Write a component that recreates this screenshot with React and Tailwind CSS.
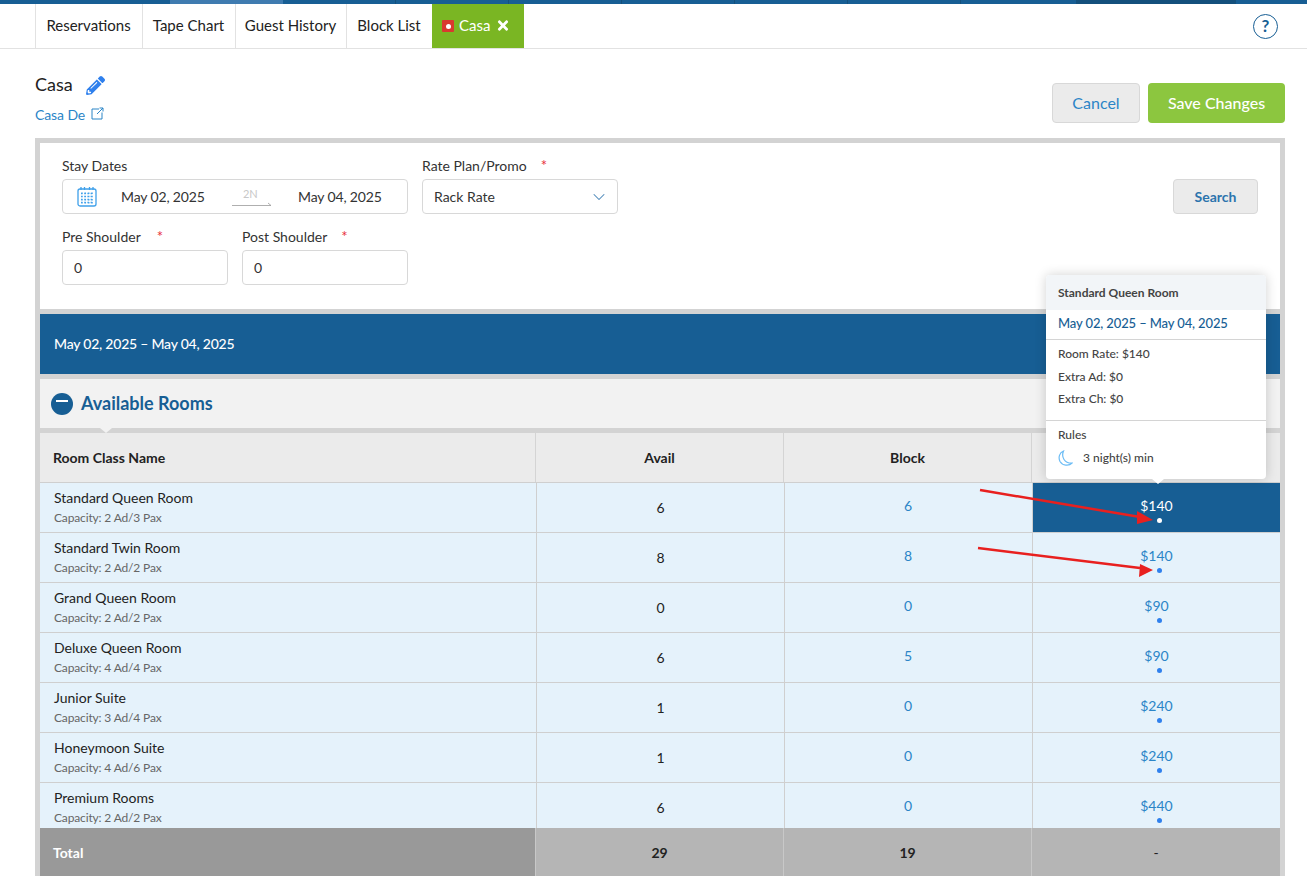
import { FaPencilAlt, FaTimes } from "react-icons/fa";
import { ChevronDown } from "lucide-react";

const rooms = [
  { name: "Standard Queen Room", cap: "Capacity: 2 Ad/3 Pax", avail: 6, block: 6, rate: "$140", active: true },
  { name: "Standard Twin Room", cap: "Capacity: 2 Ad/2 Pax", avail: 8, block: 8, rate: "$140" },
  { name: "Grand Queen Room", cap: "Capacity: 2 Ad/2 Pax", avail: 0, block: 0, rate: "$90" },
  { name: "Deluxe Queen Room", cap: "Capacity: 4 Ad/4 Pax", avail: 6, block: 5, rate: "$90" },
  { name: "Junior Suite", cap: "Capacity: 3 Ad/4 Pax", avail: 1, block: 0, rate: "$240" },
  { name: "Honeymoon Suite", cap: "Capacity: 4 Ad/6 Pax", avail: 1, block: 0, rate: "$240" },
  { name: "Premium Rooms", cap: "Capacity: 2 Ad/2 Pax", avail: 6, block: 0, rate: "$440" },
];

const tabs = [
  { label: "Reservations", width: "w-[107px]" },
  { label: "Tape Chart", width: "w-[93px]" },
  { label: "Guest History", width: "w-[111px]" },
  { label: "Block List", width: "w-[86px]" },
];

function Label({ children, required, gap = "ml-4" }) {
  return (
    <div className="text-[14px] leading-[17px] text-[#333] mb-[5px] h-[17px]">
      {children}
      {required && <span className={`${gap} text-[15px] text-[#e8303a]`}>*</span>}
    </div>
  );
}

function Arrows() {
  return (
    <svg className="absolute left-0 top-0 pointer-events-none" width="1307" height="876">
      <line x1="980" y1="490" x2="1140" y2="517" stroke="#e8201f" strokeWidth="2.5" />
      <polygon points="1153,520 1137,524 1137,511" fill="#e8201f" />
      <line x1="978" y1="548" x2="1140" y2="568" stroke="#e8201f" strokeWidth="2.5" />
      <polygon points="1153,570 1139,577 1140,564" fill="#e8201f" />
    </svg>
  );
}

function RateTooltip() {
  return (
    <div className="absolute left-[1046px] top-[275px] w-[220px] h-[204px] bg-white rounded-sm shadow-[0_0_12px_rgba(0,0,0,0.18)] text-[#444]">
      <div className="h-[35px] bg-[#f2f5f8] flex items-center px-3 text-[12px] font-bold text-[#444] rounded-t-sm">
        Standard Queen Room
      </div>
      <div className="h-[30px] border-b border-[#d4d4d4] flex items-center pb-[2px] px-3 text-[13px] font-medium text-[#175e94] tracking-[-0.12px]">
        May 02, 2025 – May 04, 2025
      </div>
      <div className="h-[81px] border-b border-[#d4d4d4] px-3 pt-[3px] text-[12px] leading-[22.5px] font-medium">
        <div>Room Rate: $140</div>
        <div>Extra Ad: $0</div>
        <div>Extra Ch: $0</div>
      </div>
      <div className="px-3 pt-[5px] text-[12px] font-medium">
        <div className="leading-[17px]">Rules</div>
        <div className="flex items-center gap-[10px] mt-[6px] h-[17px]">
          <svg width="15" height="16" viewBox="0 0 15 16" fill="none" stroke="#6bbcf5" strokeWidth="1.2">
            <path d="M5.5 1C3 7 6.5 13.5 14 13.2C11 16.3 4.5 15.8 2 11.5C0 7.5 1.5 2.5 5.5 1Z" />
          </svg>
          <span>3 night(s) min</span>
        </div>
      </div>
      <div className="absolute left-[106px] -bottom-[5px] w-0 h-0 border-x-[6px] border-x-transparent border-t-[5px] border-t-white" />
    </div>
  );
}

export default function App() {
  return (
    <div className="relative w-[1307px] h-[876px] overflow-hidden bg-white text-[#222]" style={{ fontFamily: "Lato, 'Open Sans', sans-serif" }}>
      {/* Top strip */}
      <div className="h-[4px] flex bg-[#175e94]">
        <div className="w-[170px]" />
        <div className="w-[113px] bg-[#3f7bb0]" />
        <div className="w-[113px] border-r border-[#14507c]" />
        <div className="w-[113px] border-r border-[#14507c]" />
        <div className="w-[113px] border-r border-[#14507c]" />
        <div className="w-[113px] border-r border-[#14507c]" />
        <div className="w-[113px] border-r border-[#14507c]" />
        <div className="w-[113px] border-r border-[#14507c]" />
        <div className="w-[115px]" />
        <div className="w-[160px] bg-[#14507c]" />
      </div>

      {/* Tab bar */}
      <div className="h-[45px] pl-[35px] pr-[29px] flex items-stretch border-b border-[#e2e2e2]">
        {tabs.map((tab) => (
          <div key={tab.label} className={`${tab.width} border-l border-[#e2e2e2] flex items-center justify-center pb-[2px] pr-[1px] text-[15px] text-[#222]`}>
            {tab.label}
          </div>
        ))}
        <div className="w-[92px] bg-[#7ab623] flex items-center pl-[10px] pb-[2px] text-[15px] text-white">
          <span className="w-[12px] h-[12px] bg-[#d9392f] rounded-[1px] flex items-center justify-center mr-[5px] mt-[2px]">
            <span className="w-[5px] h-[5px] bg-white rounded-full" />
          </span>
          Casa
          <FaTimes className="ml-[6px] w-[14px] h-[15px]" />
        </div>
        <div className="ml-auto flex items-center">
          <div className="w-[25px] h-[25px] rounded-full border border-[#175e94] flex items-center justify-center text-[17px] font-bold text-[#175e94]">
            ?
          </div>
        </div>
      </div>

      {/* Title row */}
      <div className="h-[89px] pl-[35px] pr-[22px] flex justify-between">
        <div>
          <div className="flex items-center mt-[25px] h-[22px] text-[18px] text-[#222]">
            <span className="mb-[1px]">Casa</span>
            <FaPencilAlt className="ml-[13px] w-[19px] h-[19px] text-[#2f80ed]" />
          </div>
          <div className="flex items-center mt-[8px] text-[14px] text-[#2b85c7] tracking-[-0.1px]">
            Casa De
            <svg className="ml-[6px] mb-[2px]" width="13" height="13" viewBox="0 0 13 13" fill="none" stroke="#2b85c7" strokeWidth="1">
              <path d="M8 2H1V12H11V5.5" />
              <path d="M6 7L12 1M8.5 1H12V4.5" />
            </svg>
          </div>
        </div>
        <div className="flex gap-2 mt-[34px]">
          <button className="w-[88px] h-[40px] bg-[#ebebeb] border border-[#d8d8d8] rounded-sm text-[16px] text-[#2b85c7]">Cancel</button>
          <button className="w-[137px] h-[40px] bg-[#8cc63f] rounded-sm text-[16px] font-medium text-white">Save Changes</button>
        </div>
      </div>

      {/* Main panel */}
      <div className="ml-[35px] w-[1250px] h-[738px] bg-[#d3d3d3] px-[5px] pt-[5px]">
        {/* Search form */}
        <div className="h-[166px] bg-white pl-[22px] pr-[22px] pt-[14px] flex justify-between">
          <div>
            <div className="flex gap-[14px]">
              <div>
                <Label>Stay Dates</Label>
                <div className="w-[346px] h-[35px] border border-[#d8d8d8] rounded-sm flex items-center text-[14px] text-[#333] tracking-[-0.15px]">
                  <svg className="ml-[14px]" width="20" height="21" viewBox="0 0 20 21" fill="none">
                    <rect x="1" y="3" width="18" height="17" rx="2" stroke="#3fa0ea" strokeWidth="1.3" />
                    <path d="M4 1v3M7.5 1v3M12.5 1v3M16 1v3" stroke="#3fa0ea" strokeWidth="1.3" />
                    <path d="M4 7.5h12M4 10.5h12M4 13.5h12M4 16.5h12M5 6.5v11M8.3 6.5v11M11.7 6.5v11M15 6.5v11" stroke="#3fa0ea" strokeWidth="1.5" strokeDasharray="1.6 1.6" />
                  </svg>
                  <span className="ml-[24px] w-[111px]">May 02, 2025</span>
                  <div className="relative w-[40px] h-[24px] mr-[26px]">
                    <span className="absolute left-[11px] top-0 text-[11px] leading-[17px] text-[#c8c8c8]">2N</span>
                    <svg className="absolute left-0 top-[16px]" width="40" height="6" viewBox="0 0 40 6" fill="none" stroke="#9a9a9a" strokeWidth="0.8">
                      <path d="M0 4.5H39L36 2" />
                    </svg>
                  </div>
                  <span>May 04, 2025</span>
                </div>
              </div>
              <div>
                <Label required gap="ml-[14px]">Rate Plan/Promo</Label>
                <div className="w-[196px] h-[35px] border border-[#d8d8d8] rounded-sm flex items-center justify-between pl-[11px] pr-[8px] text-[14px] text-[#333]">
                  Rack Rate
                  <ChevronDown className="w-[20px] h-[20px] text-[#4a86b8]" strokeWidth={1.25} />
                </div>
              </div>
            </div>
            <div className="flex gap-[14px] mt-[14px]">
              <div>
                <Label required>Pre Shoulder</Label>
                <div className="w-[166px] h-[35px] border border-[#d8d8d8] rounded-sm flex items-center pl-[11px] text-[14px] text-[#333]">0</div>
              </div>
              <div>
                <Label required gap="ml-[14px]">Post Shoulder</Label>
                <div className="w-[166px] h-[35px] border border-[#d8d8d8] rounded-sm flex items-center pl-[11px] text-[14px] text-[#333]">0</div>
              </div>
            </div>
          </div>
          <button className="mt-[22px] w-[85px] h-[35px] bg-[#ebebeb] border border-[#d8d8d8] rounded-sm text-[14px] font-bold text-[#2b74ad]">Search</button>
        </div>

        {/* Date band */}
        <div className="mt-[5px] h-[60px] bg-[#175e94] flex items-center pl-[14px] pb-[2px] text-[14px] font-medium text-white tracking-[-0.22px]">
          May 02, 2025 – May 04, 2025
        </div>

        {/* Available rooms header */}
        <div className="relative mt-[5px] h-[49px] bg-[#f2f2f2] flex items-center pl-[11px] pr-[14px]">
          <span className="w-[22px] h-[22px] rounded-full bg-[#175e94] flex items-center justify-center">
            <span className="w-[12px] h-[2px] bg-white mb-[5px]" />
          </span>
          <span className="ml-[8px] text-[18px] font-bold text-[#175e94]">Available Rooms</span>
          <div className="ml-auto w-[120px] h-[35px] border-r border-[#c8c8c8]" />
          <div className="absolute left-[60px] top-[49px] w-0 h-0 border-x-[6px] border-x-transparent border-t-[5px] border-t-[#f2f2f2]" />
        </div>

        {/* Table */}
        <div className="mt-[5px]">
          <div className="grid grid-cols-[495px_248px_248px_249px] h-[50px] bg-[#ebebeb] border-b border-[#cfcfcf] text-[14px] font-bold text-[#222]">
            <div className="flex items-center pl-[13px]">Room Class Name</div>
            <div className="flex items-center justify-center border-l border-[#d4d4d4]">Avail</div>
            <div className="flex items-center justify-center border-l border-[#d4d4d4]">Block</div>
            <div className="border-l border-[#d4d4d4]" />
          </div>
          <div className="h-[345px] overflow-hidden">
            {rooms.map((room) => (
              <div key={room.name} className="grid grid-cols-[496px_248px_248px_248px] h-[50px] bg-[#e5f2fb] border-b border-[#cfcfcf]">
                <div className="pl-[14px] pt-[6px]">
                  <div className="text-[14px] leading-[18px] text-[#222]">{room.name}</div>
                  <div className="text-[12px] leading-[15px] mt-[3px] text-[#666] tracking-[-0.15px]">{room.cap}</div>
                </div>
                <div className="flex items-center justify-center border-l border-[#cfcfcf] text-[14px] text-[#222]">{room.avail}</div>
                <div className="flex justify-center pt-[14px] pr-[1px] border-l border-[#cfcfcf] text-[14px] leading-[18px] text-[#2b85c7]">{room.block}</div>
                <div className={`flex flex-col items-center pt-[14px] border-l border-[#cfcfcf] ${room.active ? "bg-[#175e94] text-white" : "text-[#2b85c7]"}`}>
                  <span className="text-[14px] leading-[18px]">{room.rate}</span>
                  <span className={`w-[5px] h-[5px] rounded-full mt-[3px] ml-[5px] ${room.active ? "bg-white" : "bg-[#2f80ed]"}`} />
                </div>
              </div>
            ))}
          </div>
          <div className="grid grid-cols-[495px_248px_248px_249px] h-[50px] pb-[2px] text-[14px] font-bold text-[#222] bg-[#b5b5b5]">
            <div className="flex items-center pl-[13px] -mb-[2px] pb-[2px] bg-[#999999] text-white">Total</div>
            <div className="flex items-center justify-center border-l border-[#c8c8c8]">29</div>
            <div className="flex items-center justify-center border-l border-[#c8c8c8]">19</div>
            <div className="flex items-center justify-center border-l border-[#c8c8c8] font-normal">-</div>
          </div>
        </div>
      </div>

      <RateTooltip />
      <Arrows />
    </div>
  );
}
